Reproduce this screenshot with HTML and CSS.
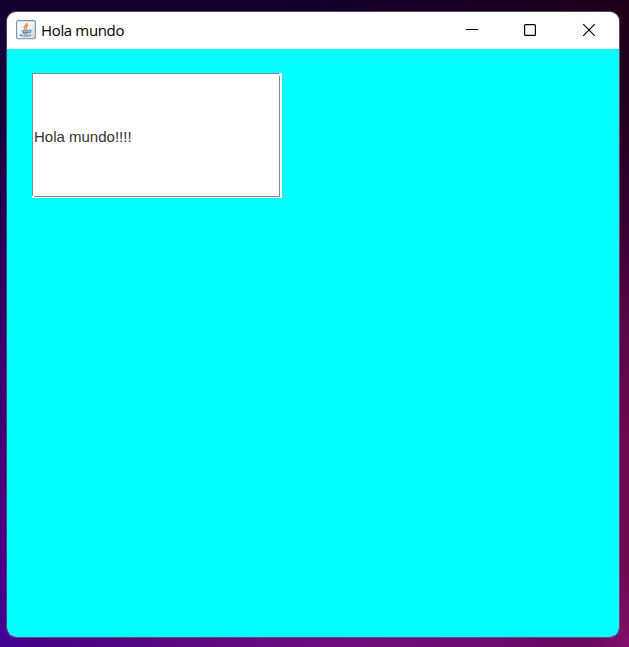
FILE: index.html
```html
<!DOCTYPE html>
<html lang="es">
<head>
<meta charset="utf-8">
<title>Hola mundo</title>
<link rel="stylesheet" href="styles.css">
</head>
<body>
<main class="window">
  <header class="titlebar">
    <svg class="app-icon" width="20" height="20" viewBox="0 0 20 20" fill="none">
      <defs><linearGradient id="tile" x2="1" y2="1"><stop stop-color="#fff"/><stop offset=".5" stop-color="#eef2f5"/><stop offset="1" stop-color="#c9d5df"/></linearGradient></defs>
      <rect x=".6" y=".6" width="18.8" height="18.2" rx="1.5" fill="url(#tile)" stroke="#7891a5" stroke-width="1.1"/>
      <path d="M10.7 3c.8 2-3.6 3-2.5 5.1.3.7 1 1 1.2 1.6M12.3 5.2c-2.5 1-2.6 1.7-1.8 2.7.5.7.2 1.3-.5 1.9" stroke="#e8934e" stroke-width="1.5"/>
      <path d="M5.5 10.4c1.5.7 5.8.6 7.5 0M6.4 12.1c1.3.7 4.7.7 6.1 0M7 13.6c1.2.6 3.8.6 4.9 0M13 10.2c2.9-.6 2.4 2.2-.2 2.7M5.5 14.3c-4.2 1.1 2.9 2.4 7 1.5 1.8-.3 2.6-.8 1.8-1.3" stroke="#6289aa" stroke-width="1.1"/>
    </svg>
    <h1 class="title">Hola mundo</h1>
    <nav class="controls">
      <svg width="58" height="37" viewBox="0 0 58 37"><path d="M23 17.5h12" stroke="#000"/></svg>
      <svg width="58" height="37" viewBox="0 0 58 37"><rect x="23.6" y="12.6" width="10.8" height="10.8" rx="1" fill="none" stroke="#000" stroke-width="1.2"/></svg>
      <svg width="58" height="37" viewBox="0 0 58 37"><path d="M24.2 12.2l11.6 11.6M35.8 12.2L24.2 23.8" stroke="#000" stroke-width="1.15"/></svg>
    </nav>
  </header>
  <section class="content">
    <div class="field">
      <svg class="etching" width="250" height="125"><path d="M247 .5H.5V123M2 123.5H247.5V3" fill="none" stroke="#7a8a99"/></svg>
      <span class="label">Hola mundo!!!!</span>
    </div>
  </section>
</main>
</body>
</html>
```
FILE: styles.css
```css
* { box-sizing: border-box; }
body {
  margin: 0;
  height: 647px;
  padding: 11px 9px 9px 6px;
  overflow: hidden;
  background:
    linear-gradient(90deg, #130030, #130030 45%, #180026 70%, #1e0018) top / 100% 12px no-repeat,
    linear-gradient(90deg, #430094, #450083 8%, #5c0a82 30%, #700b80 52%, #6e0b75 75%, #680a5c 94%, #850f68) bottom / 100% 11px no-repeat,
    linear-gradient(#1e0018, #22001c 15%, #390032 35%, #5c0748 52%, #700a50 70%, #6f0a55 88%, #800f68) right / 12px 100% no-repeat,
    linear-gradient(#130030, #150038 18%, #29005a 38%, #3e0070 58%, #4b0080 78%, #430094) #130030;
}
.window {
  height: 627px;
  border: 1px solid #69546e;
  border-color: #54435c #714670 #753e7d #583e70;
  border-radius: 10px;
  background: #0ff;
  background-clip: padding-box;
  overflow: hidden;
}
.titlebar {
  display: flex;
  align-items: center;
  height: 37px;
  padding-left: 9px;
  background: #fff;
}
.app-icon { margin-bottom: 1px; }
.title {
  margin: 0 0 1px 5px;
  font: 400 15px/20px "Open Sans", "Noto Sans", sans-serif;
  letter-spacing: -0.35px;
  color: #000;
}
.controls {
  display: flex;
  margin-left: auto;
  padding-right: 2px;
}
.content { padding: 24px 25px; }
.field {
  position: relative;
  display: flex;
  align-items: center;
  width: 250px;
  height: 125px;
  padding: 2px;
  background: #fff;
}
.etching { position: absolute; inset: 0; }
.label {
  margin-top: 2px;
  font: 15px/18px "Liberation Sans", Arial, sans-serif;
  color: #333;
}
```
